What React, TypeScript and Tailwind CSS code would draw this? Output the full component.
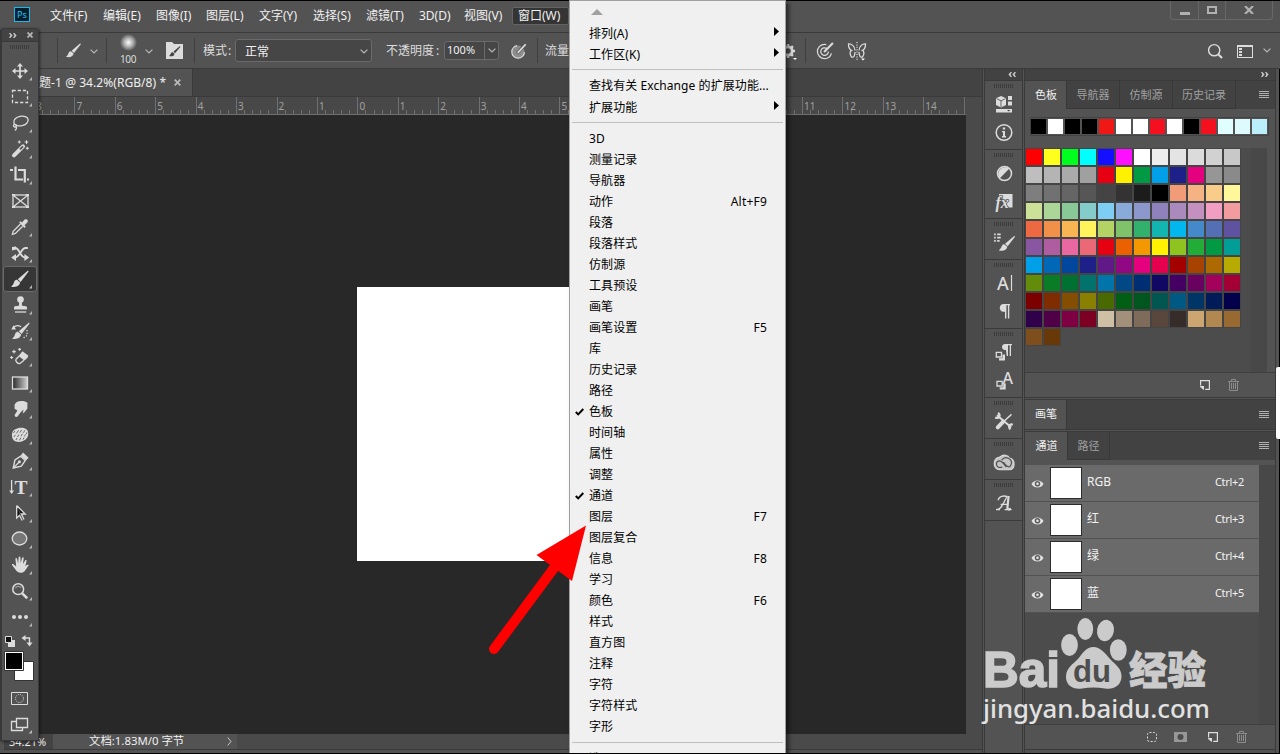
import type { ReactNode } from 'react';
import clsx from 'clsx';

const menus = [
	{ label: '文件(F)', width: 'w-[53px]' },
	{ label: '编辑(E)', width: 'w-[53px]' },
	{ label: '图像(I)', width: 'w-[50px]' },
	{ label: '图层(L)', width: 'w-[53px]' },
	{ label: '文字(Y)', width: 'w-[54px]' },
	{ label: '选择(S)', width: 'w-[53px]' },
	{ label: '滤镜(T)', width: 'w-[53px]' },
	{ label: '3D(D)', width: 'w-[45px]' },
	{ label: '视图(V)', width: 'w-[48px]' },
];

type MenuRow = { label: string; key?: string; checked?: boolean };

const windowItems: MenuRow[] = [
	{ label: '3D' },
	{ label: '测量记录' },
	{ label: '导航器' },
	{ label: '动作', key: 'Alt+F9' },
	{ label: '段落' },
	{ label: '段落样式' },
	{ label: '仿制源' },
	{ label: '工具预设' },
	{ label: '画笔' },
	{ label: '画笔设置', key: 'F5' },
	{ label: '库' },
	{ label: '历史记录' },
	{ label: '路径' },
	{ label: '色板', checked: true },
	{ label: '时间轴' },
	{ label: '属性' },
	{ label: '调整' },
	{ label: '通道', checked: true },
	{ label: '图层', key: 'F7' },
	{ label: '图层复合' },
	{ label: '信息', key: 'F8' },
	{ label: '学习' },
	{ label: '颜色', key: 'F6' },
	{ label: '样式' },
	{ label: '直方图' },
	{ label: '注释' },
	{ label: '字符' },
	{ label: '字符样式' },
	{ label: '字形' },
];

const recent =
	'000000 ffffff 000000 000000 f01814 ffffff ffffff f51020 ffffff 000000 f51020 e0fdff dffafd baeefa'.split(
		' '
	);

const swatches = [
	'ff0000 ffff1e 00ff1e 00ffff 1410ff ff0fff ffffff ededed e4e4e4 dbdbdb d1d1d1 c8c8c8',
	'bebebe b4b4b4 aaaaaa a0a0a0 e60012 fff100 009944 00a0e9 1d2088 e4007f 969696 8a8a8a',
	'7e7e7e 717171 656565 565656 444444 333333 1c1c1c 000000 f19b78 f5b282 f9cc8a fff799',
	'cce198 acd598 89c997 84ccc9 7ecef4 88abda 8c97cb 8f82bc aa89bd c490bf f19ec2 f29c9f',
	'ec6941 f19149 f8b551 fff45c b3d465 80c269 32b16c 13b5b1 00b7ee 448aca 556fb5 5f52a0',
	'8957a1 ae5da1 ea68a2 eb6877 e60012 eb6100 f39800 fff100 8fc31f 22ac38 009944 009e96',
	'00a0e9 0068b7 00479d 1d2088 601986 920783 e4007f e5004f a40000 a84200 ac6a00 b7aa00',
	'638c0b 097c25 007130 00736d 0075a9 004986 002e73 100964 440062 6a005f a4005b a40035',
	'7d0000 7f2d00 834e00 8a8000 486a00 005e15 00561f 005752 005982 003567 001c58 03004c',
	'31004a 500047 7e0043 7d0022 cfbfa5 a3907b 7e6b5a 59463d 362c2a cca571 b18850 986931',
	'7e4f1c 693808',
].map((r) => r.split(' '));

const channels = [
	{ name: 'RGB', key: 'Ctrl+2' },
	{ name: '红', key: 'Ctrl+3' },
	{ name: '绿', key: 'Ctrl+4' },
	{ name: '蓝', key: 'Ctrl+5' },
];

// 6-10 are covered by the open menu
const majors = [8, 7, 6, 5, 4, 3, 2, 1, 0, 1, 2, 3, 4, 5, '', '', '', '', '', 11, 12, 13, 14, ''];

function Icon({ size = 20, children, className }: { size?: number; children: ReactNode; className?: string }) {
	return (
		<svg
			width={size}
			height={size}
			viewBox="0 0 20 20"
			fill="none"
			stroke="#dcdcdc"
			strokeWidth="1.3"
			className={clsx('shrink-0 overflow-visible', className)}
		>
			{children}
		</svg>
	);
}

const F = { fill: '#dcdcdc', stroke: 'none' };

function BrushShape() {
	return (
		<>
			<path {...F} d="M18 1.6L7.8 10.2L10.6 13L18.6 2.6Z" />
			<path {...F} d="M7 10.8C4.4 10.9 4.4 12.8 3.6 14.4C3.1 15.6 2 16.8 1 17.4C4.8 18.8 9.8 17.4 10.1 13.6Z" />
		</>
	);
}

const tools: { id: string; art: ReactNode; plain?: boolean }[] = [
	{
		id: 'move',
		art: (
			<>
				<path d="M10 4V16M4 10H16" strokeWidth="1.7" />
				<path {...F} d="M10 2L13 5.5H7ZM10 18L7 14.5H13ZM2 10L5.5 7V13ZM18 10L14.5 13V7Z" />
			</>
		),
	},
	{ id: 'marquee', art: <rect x="2.5" y="3.5" width="15" height="12" strokeDasharray="3.2 2" /> },
	{
		id: 'lasso',
		art: (
			<>
				<ellipse cx="11" cy="8" rx="7.3" ry="4.8" transform="rotate(-12 11 8)" />
				<path d="M4 11.5C2.6 12.8 4 14.6 5.8 13.8C7.4 12.8 5.4 10.8 4 11.7M6 13.5C7.2 15 6 17 4.8 17.4" />
			</>
		),
	},
	{
		id: 'wand',
		art: (
			<>
				<path d="M4 16.4L13 7.4" strokeWidth="4" strokeLinecap="round" />
				<path d="M10 10.3L13 7.3" stroke="#535353" strokeWidth="1.8" />
				<path d="M9.3 1.5V4.5M7.8 3H10.8M16.5 1.2V5M14.6 3H18.4M17.3 7.7V10.7M15.8 9.2H18.8" strokeWidth="1.1" />
			</>
		),
	},
	{
		id: 'crop',
		art: (
			<>
				<path d="M5.5 1.5V14.5H13M8 5H14.8V17.5" strokeWidth="2.2" />
				<path {...F} d="M0 4H3V6H0ZM17 13.5H19V15.5H17Z" />
			</>
		),
	},
	{
		id: 'frame',
		plain: true,
		art: (
			<>
				<rect x="3" y="4" width="15" height="12" />
				<path d="M3 4L18 16M18 4L3 16" />
				<path {...F} d="M2 3h3v2H2zM16 3h3v2h-3zM2 15h3v2H2zM16 15h3v2h-3z" />
			</>
		),
	},
	{
		id: 'eyedropper',
		art: (
			<>
				<path d="M10.5 7L3.2 14.4L2.4 17.3L5.4 16.5L12.7 9.3" />
				<path {...F} d="M9.2 5.4L10.5 4.2L12 5.6L14.6 2.6C16.5 1.2 19 3.5 17.3 5.5L14.5 8.2L15.8 9.6L14.5 10.9Z" />
			</>
		),
	},
	{
		id: 'mixer',
		art: (
			<>
				<path d="M2.5 5H5C10 5 10 14.5 15 14.5M17.8 5H15.5C11 5.2 9.6 14.5 5 14.5" strokeWidth="1.8" />
				<path {...F} d="M1.2 14.5L6 11V18ZM19.2 14.5L14.4 11V18ZM2 4L6 3.6V6.6L2 7.4Z" />
			</>
		),
	},
	{ id: 'brush', art: <BrushShape /> },
	{
		id: 'stamp',
		art: (
			<>
				<circle {...F} cx="10.5" cy="4.6" r="3.3" />
				<path {...F} d="M9.1 6H11.9V10.5C14 11.4 17 10.8 17 12.4V14.4H4V12.4C4 10.8 7 11.4 9.1 10.5Z" />
				<path d="M5 17H16.2" />
			</>
		),
	},
	{
		id: 'history',
		art: (
			<>
				<g transform="translate(1 0)">
					<BrushShape />
				</g>
				<path d="M3.5 6.5C6 4 9 4.6 11 5.8" />
				<path {...F} d="M1.2 8.5L3.6 4.2L6 8.5Z" />
				<path d="M17 9V14.5L12.5 17.6" strokeDasharray="1.2 1.6" />
			</>
		),
	},
	{
		id: 'eraser',
		art: (
			<>
				<path {...F} d="M12.5 4.2L18.2 8.4C18.6 9.8 16 12.4 14.3 13.5L8.5 9Z" />
				<path d="M9 9.2L6 12.2C5 14 7.6 17 10 16.5L14 13.2" />
				<path d="M4 2.8V6.4M2.2 4.6H5.8M9.6 1V3.8M8.2 2.4H11M1.6 9V12M.1 10.5H3.1" strokeWidth="1.1" />
			</>
		),
	},
	{
		id: 'gradient',
		art: (
			<>
				<defs>
					<linearGradient id="gt">
						<stop offset="0" stopColor="#2a2a2a" />
						<stop offset="1" stopColor="#d0d0d0" />
					</linearGradient>
				</defs>
				<rect x="2.5" y="4" width="15" height="12" fill="url(#gt)" />
			</>
		),
	},
	{
		id: 'smudge',
		art: (
			<path
				{...F}
				d="M6.4 3.2C10 1.4 15 1.7 17.4 3.8V9.5L14.5 13.2L12.6 14.5L13.6 10.5L10.7 13.2L7.6 17.5C6.2 18.6 4 17.5 4.8 15.8L7.4 11.4L4.6 9.7V5.4Z"
			/>
		),
	},
	{
		id: 'sponge',
		art: (
			<>
				<path {...F} d="M5 4.6C8 2.6 13 2.2 16 4C19 6 18.6 10 17.3 12.4C15 16 10 17.6 6 16.6C2 15.2 1.6 11 2.2 8C2.7 6 3.6 5.4 5 4.6Z" />
				<path
					d="M3.4 8L5 6M6.4 8.4L8.6 5.4M10 7.6L11.6 4.8M13.4 7.8L14.8 5.4M16.4 9L17 7.4M3.8 12L5.4 9.8M7.4 12L9 9.6M11 11.2L12.4 8.8M14.4 11.4L15.6 9.4M6 15L7 13M9.4 15.4L10.8 12.8M13 14.6L14 12.6"
					stroke="#6a6a6a"
					strokeWidth="1"
				/>
			</>
		),
	},
	{
		id: 'pen',
		art: (
			<>
				<path d="M3.3 17L4.9 9L10.8 5.2L15.2 9.6L11.3 15.2Z" strokeWidth="1.4" />
				<path d="M3.6 16.6L9 11.2" />
				<circle {...F} cx="9.4" cy="10.8" r="1.5" />
				<path {...F} d="M13 1.6L18.6 6.8L16 9.6L10.8 4.6Z" />
			</>
		),
	},
	{
		id: 'type',
		art: (
			<>
				<path d="M1.6 3V15.5" />
				<path {...F} d="M-.8 13.6H4L1.6 17Z" />
				<text x="4.6" y="16.7" fontSize="19.5" fontWeight="bold" fontFamily="Liberation Serif, serif" {...F}>
					T
				</text>
			</>
		),
	},
	{ id: 'select', art: <path d="M6.7 2.5V15L9.6 12.3L12.2 17.5M6.7 2.5L15.2 11H11.4L14 16.6" fill="#101010" /> },
	{ id: 'ellipse', art: <ellipse cx="9.5" cy="9.5" rx="7.3" ry="6.5" fill="#777" /> },
	{
		id: 'hand',
		art: (
			<path
				{...F}
				d="M6 9.2L5.4 4C5.4 2.8 6.9 2.8 7.1 4L8.1 8.5L8.6 2.4C8.7 1.2 10.3 1.2 10.4 2.4L10.7 8.3L12 2.9C12.3 1.8 13.8 2 13.7 3.2L13 9L15.1 5.4C15.7 4.5 16.9 5.1 16.5 6.3L15.4 11C17 10 18.6 9.4 18.8 10.3L15.4 15C14 18.4 8.6 18.9 6.2 15.6L2 9.9C1.6 8.8 3 8.6 3.9 9.4L6.2 11.6Z"
			/>
		),
	},
	{
		id: 'zoom',
		art: (
			<>
				<circle cx="8.2" cy="8.2" r="5.4" strokeWidth="1.5" />
				<path d="M5.4 7.2C6 5.2 9.5 4.4 11 6.8" stroke="#999" />
				<path d="M12.2 12.4L17.2 17.2" strokeWidth="2.6" />
			</>
		),
	},
	{
		id: 'more',
		art: (
			<>
				<circle {...F} cx="4" cy="10" r="2" />
				<circle {...F} cx="10" cy="10" r="2" />
				<circle {...F} cx="16" cy="10" r="2" />
			</>
		),
	},
];

function Grip({ className }: { className?: string }) {
	return (
		<svg width="20" height="4" className={clsx('shrink-0', className)}>
			{Array.from({ length: 10 }, (_, i) => (
				<rect key={i} x={i * 2} width="1" height="4" fill="#3c3c3c" />
			))}
		</svg>
	);
}

function Chevron() {
	return (
		<svg width="8" height="5" viewBox="0 0 8 5" fill="none" stroke="#b8b8b8" strokeWidth="1.2" className="shrink-0">
			<path d="M.6 .6L4 4L7.4 .6" />
		</svg>
	);
}

function DoubleArrow({ left }: { left?: boolean }) {
	return (
		<svg width="8" height="5" viewBox="0 0 8 5" fill="#c8c8c8" className={clsx(left && 'rotate-180')}>
			<path d="M0 0H1.4L3.6 2.5L1.4 5H0L1.4 2.5ZM4 0H5.4L7.6 2.5L5.4 5H4L5.4 2.5Z" />
		</svg>
	);
}

function PanelMenu() {
	return (
		<div className="mr-[6px] mb-px ml-auto flex flex-col gap-px">
			<i className="h-px w-[10px] bg-[#b0b0b0]" />
			<i className="h-px w-[10px] bg-[#b0b0b0]" />
			<i className="h-px w-[10px] bg-[#b0b0b0]" />
			<i className="h-px w-[10px] bg-[#b0b0b0]" />
		</div>
	);
}

function NewIcon() {
	return (
		<svg width="10" height="10" viewBox="0 0 10 10" fill="none" stroke="#dcdcdc" strokeWidth="1.2" className="shrink-0">
			<path d="M.6 5.5V.6H9.4V9.4H5.2" />
			<path d="M0 6H4V10L2.4 8.9L0 6.8Z" fill="#dcdcdc" stroke="none" />
		</svg>
	);
}

function Trash() {
	return (
		<svg width="11" height="12" viewBox="0 0 11 12" fill="none" stroke="#8c8c8c" className="shrink-0">
			<path d="M0 2.5H11M3.5 2V.5H7.5V2M1.5 3V11.5H9.5V3M3.5 4V10M5.5 4V10M7.5 4V10" />
		</svg>
	);
}

function TitleBar() {
	return (
		<div className="flex h-[33px] shrink-0 border-t border-b border-t-black border-b-[#3a3a3a] text-[12px] text-[#f0f0f0]">
			<div className="mt-[6px] ml-[14px] flex h-[15px] w-4 items-center justify-center border border-[#14b9ee] bg-[#051e2c] text-[9px] leading-none text-[#1ec3f5]">
				Ps
			</div>
			<div className="ml-5 flex h-[30px] items-center">
				{menus.map((m) => (
					<span key={m.label} className={clsx('whitespace-nowrap', m.width)}>
						{m.label}
					</span>
				))}
				<span className="flex h-[18px] w-[57px] items-center rounded-[2px] border border-[#636363] bg-[#353535] pl-[5px] whitespace-nowrap">
					窗口(W)
				</span>
			</div>
			<div className="mr-[7px] ml-auto flex h-[19px] w-[103px] rounded-b-[3px] border border-t-0 border-[#686868]">
				<div className="flex w-[28px] items-end justify-center border-r border-[#686868] pb-[4px]">
					<i className="h-[3px] w-[10px] bg-[#b0b0b0]" />
				</div>
				<div className="flex w-[27px] items-center justify-center border-r border-[#686868]">
					<i className="h-[8px] w-[10px] border-2 border-[#b0b0b0]" />
				</div>
				<div className="flex flex-1 items-center justify-center">
					<svg width="10" height="8" viewBox="0 0 10 8" stroke="#b0b0b0" strokeWidth="2.2">
						<path d="M1 0L9 8M9 0L1 8" />
					</svg>
				</div>
			</div>
		</div>
	);
}

function Divider({ className }: { className?: string }) {
	return <i className={clsx('h-[25px] w-px shrink-0 bg-[#3f3f3f]', className)} />;
}

function OptionsBar() {
	return (
		<div className="flex h-9 shrink-0 items-center border-b border-[#3a3a3a] text-[12px] whitespace-nowrap text-[#dcdcdc]">
			<Divider className="ml-[57px]" />
			<Icon size={17} className="mb-px ml-[7px]">
				<BrushShape />
			</Icon>
			<div className="mt-px ml-[8px]">
				<Chevron />
			</div>
			<Divider className="ml-[8px]" />
			<div className="ml-[12px] flex w-[18px] flex-col items-center">
				<i className="size-[17px] shrink-0 rounded-full bg-[radial-gradient(circle,#f2f2f2_5%,#b4b4b4_35%,#535353_72%)]" />
				<span className="mt-px text-[10px] leading-[15px] tracking-[-0.4px]">100</span>
			</div>
			<div className="mt-px ml-[8px]">
				<Chevron />
			</div>
			<svg width="17" height="17" viewBox="0 0 17 17" className="ml-[13px]">
				<path fill="#dcdcdc" d="M0 0H6L8 2H17V17H0Z" />
				<path fill="#444" d="M14 4L7.5 9.5L9 11.2L14.3 5ZM6.8 10.2C4.6 10 5 12.6 3 14C5 14.8 8.4 14.4 8.5 11.8Z" />
			</svg>
			<Divider className="ml-[11px]" />
			<span className="ml-[8px]">模式</span>
			<span className="w-[8px] pl-[1px]">:</span>
			<div className="flex h-[23px] w-[137px] items-center justify-between rounded-[3px] border border-[#6a6a6a] bg-[#464646] pt-[2px] pr-[3px] pl-[9px] text-[#f0f0f0]">
				正常
				<Chevron />
			</div>
			<span className="ml-[14px]">不透明度</span>
			<span className="w-[10px] pl-[2px]">:</span>
			<div className="flex h-[19px] w-[55px] items-center rounded-[3px] border border-[#6a6a6a] bg-[#464646] pl-[2px] text-[11px] text-[#f0f0f0]">
				<span className="w-[37px]">100%</span>
				<span className="flex h-full w-[14px] items-center justify-center border-l border-[#6a6a6a]">
					<Chevron />
				</span>
			</div>
			<Icon size={18} className="ml-[11px]">
				<circle cx="9" cy="11" r="7" fill="#8c8c8c" strokeDasharray="31 13" />
				<path d="M8 12.5L16.5 3" strokeWidth="3.4" stroke="#535353" />
				<path d="M8.5 12L17.5 2.5" strokeWidth="2" />
			</Icon>
			<Divider className="ml-[9px]" />
			<span className="w-[243px] pl-[7px]">流量</span>
			<Icon size={14}>
				<circle cx="10" cy="10" r="6" strokeWidth="4" />
				<path d="M10 0V4M10 16V20M0 10H4M16 10H20M3 3L6 6M14 14L17 17M3 17L6 14M14 6L17 3" strokeWidth="3.4" />
			</Icon>
			<svg width="4" height="2" className="mt-[17px] ml-[-2px]" fill="#fff">
				<path d="M0 0H4L2 2Z" />
			</svg>
			<Divider className="ml-[8px]" />
			<Icon size={19} className="mb-px ml-[10px]">
				<circle cx="9" cy="11" r="7.5" strokeDasharray="35 12" strokeDashoffset="-2" />
				<path d="M11.5 8A4 4 0 1 0 13 11" />
				<path d="M8.5 11.5L17.8 2" strokeWidth="2.2" />
			</Icon>
			<Icon size={20} className="ml-[12px]">
				<path d="M10 1V19" strokeDasharray="1 1.4" />
				<path d="M8 9.5C8 5 4 2.5 1.5 3C1.5 6 2.5 8.5 4.5 9.3C2.5 10.3 2.8 14 4.5 16C7 17 8 14 8 11M12 9.5C12 5 16 2.5 18.5 3C18.5 6 17.5 8.5 15.5 9.3C17.5 10.3 17.2 14 15.5 16C13 17 12 14 12 11" />
				<path d="M14 17.5H18L16 19.5Z" fill="#fff" stroke="none" />
			</Icon>
			<Icon size={16} className="ml-auto">
				<circle cx="9" cy="9" r="7" strokeWidth="1.8" />
				<path d="M14 14L18.8 18.8" strokeWidth="2.6" />
			</Icon>
			<div className="mt-px ml-[14px] flex h-[13px] w-4 items-center border border-t-2 border-[#dcdcdc] pl-px">
				<svg width="3" height="8" fill="#dcdcdc">
					<path d="M0 0H3V2H0ZM0 3H3V5H0ZM0 6H3V8H0Z" />
				</svg>
			</div>
			<div className="mr-[9px] ml-[10px]">
				<Chevron />
			</div>
		</div>
	);
}

function Ruler() {
	return (
		<div className="flex h-[18px] overflow-hidden border-b border-[#6e6e6e] bg-[#484848] pl-[34px] text-[10px] text-[#a0a0a0]">
			{majors.map((n, i) => (
				<div key={i} className="flex w-[40.43px] shrink-0 items-end">
					<div className="flex h-full w-[8.09px] items-center border-l border-[#707070] pl-px leading-none">
						{n}
					</div>
					<i className="h-[4px] w-[8.09px] border-l border-[#707070]" />
					<i className="h-[4px] w-[8.09px] border-l border-[#707070]" />
					<i className="h-[4px] w-[8.09px] border-l border-[#707070]" />
					<i className="h-[4px] w-[8.09px] border-l border-[#707070]" />
				</div>
			))}
		</div>
	);
}

function DocumentArea() {
	return (
		<div className="flex w-[983px] shrink-0 flex-col border-r border-[#3a3a3a]">
			<div className="flex h-[28px] border-b border-[#3a3a3a] bg-[#434343]">
				<div className="flex w-[193px] items-center border-r border-[#3a3a3a] bg-[#535353] text-[12px] whitespace-nowrap text-[#f0f0f0]">
					<span className="ml-[27px] w-[147px] pt-px tracking-[0.06px]">标题-1 @ 34.2%(RGB/8) *</span>
					<svg width="7" height="7" viewBox="0 0 7 7" stroke="#b8b8b8" strokeWidth="1.8">
						<path d="M.7 .7L6.3 6.3M6.3 .7L.7 6.3" />
					</svg>
				</div>
			</div>
			<div className="flex min-h-0 flex-1">
				<div className="flex w-[966px] flex-col">
					<Ruler />
					<div className="flex-1 bg-[#282828] pt-[172px] pl-[357px]">
						<div className="h-[274px] w-[406px] bg-white" />
					</div>
				</div>
				<div className="flex-1 bg-[#4a4a4a]" />
			</div>
			<div className="ml-1 flex h-4 items-center border-b border-[#3a3a3a] bg-[#4a4a4a] text-[11px] whitespace-nowrap text-[#f0f0f0]">
				<span className="w-[49px] bg-[#434343] pl-[5px] leading-[15px]">34.21%</span>
				<div className="flex h-full w-[184px] items-center bg-[#535353] pl-[36px] leading-none">
					<span className="w-[138px] pb-px text-[11.4px]">文档:1.83M/0 字节</span>
					<svg width="5" height="9" viewBox="0 0 5 9" fill="none" stroke="#c8c8c8">
						<path d="M.7 .5L4 4.5L.7 8.5" />
					</svg>
				</div>
			</div>
			<div className="h-[3px]" />
		</div>
	);
}

function DockGroup({ children, tall }: { children: ReactNode; tall?: boolean }) {
	return (
		<div
			className={clsx(
				'flex shrink-0 flex-col items-center border-b border-[#3a3a3a] pt-[3px]',
				tall ? 'h-[69px]' : 'h-[41px]'
			)}
		>
			<Grip />
			<div className={clsx('flex flex-col items-center pl-px', tall ? 'mt-[6px] gap-[9px]' : 'mt-[5px]')}>
				{children}
			</div>
		</div>
	);
}

function Dock() {
	return (
		<div className="ml-px flex w-[39px] shrink-0 flex-col border-r border-l border-[#3a3a3a]">
			<div className="flex h-[12px] shrink-0 items-center justify-end border-b border-[#3a3a3a] bg-[#424242] pr-[6px]">
				<DoubleArrow left />
			</div>
			<DockGroup tall>
				<Icon>
					<path {...F} d="M7 2L12 4.3V11L7 13.5L2 11V4.3Z" />
					<path d="M2.5 4.6L7 6.8L11.5 4.6M7 6.8V13" stroke="#666" strokeWidth="1" />
					<path {...F} d="M14 2H18V6H14ZM14 7.5H18V11.5H14ZM2 15H18V18.5H2Z" />
					<path fill="#444" stroke="none" d="M13 16H16.4L14.7 17.6Z" />
				</Icon>
				<Icon>
					<circle cx="10" cy="9.5" r="7.8" strokeWidth="1.5" />
					<path {...F} d="M8.8 4.5H11.2V6.5H8.8ZM8 7.9H11V13.1H12V14.5H8V13.1H9V9.3H8Z" />
				</Icon>
			</DockGroup>
			<DockGroup tall>
				<Icon>
					<circle cx="10.5" cy="10.5" r="7" strokeWidth="1.5" />
					<path {...F} d="M5.6 15.4L15.4 5.6A7 7 0 0 0 5.6 15.4Z" />
				</Icon>
				<Icon>
					<path {...F} d="M5 2H18.5V15.5H11V9H5Z" />
					<text x="1.5" y="16" fontSize="16" fontStyle="italic" fontWeight="bold" fontFamily="Liberation Serif, serif" fill="#dcdcdc" stroke="#535353" strokeWidth="1.6" paintOrder="stroke">
						fx
					</text>
				</Icon>
			</DockGroup>
			<DockGroup>
				<Icon size={22}>
					<g transform="translate(4.4 3) scale(.84)">
						<BrushShape />
					</g>
					<path d="M1 3H2.5M3.8 3H7M1 6H2.5M3.8 6H7M1 9H2.5M3.8 9H6" strokeWidth="1.6" />
				</Icon>
			</DockGroup>
			<DockGroup tall>
				<Icon>
					<text x="3" y="16.5" fontSize="18" fontFamily="Noto Sans, sans-serif" {...F} fontWeight="500">
						A
					</text>
					<path d="M17.5 2V18" strokeWidth="1.2" />
				</Icon>
				<Icon>
					<path {...F} d="M11 9.8H9.5C4.5 9.8 4.5 2 9.5 2H16V3.2H15.3V16.5H13.9V3.2H12.4V16.5H11Z" />
				</Icon>
			</DockGroup>
			<DockGroup tall>
				<Icon>
					<path {...F} d="M12 8H11C7 8 7 2 11 2H18V3.2H17V14H15.7V3.2H14V14H12.7Z" />
					<path d="M2.3 10.3H7.5V15H2.3Z" />
					<path {...F} d="M8.5 12.5H11V18.5H5V16.2H8.5Z" />
				</Icon>
				<Icon>
					<text x="8.6" y="13.3" fontSize="16" fontFamily="Noto Sans, sans-serif" {...F} fontWeight="500">
						A
					</text>
					<path d="M3 10.3H8.2V15H3Z" />
					<path {...F} d="M9.2 12.5H11.7V18.5H5.7V16.2H9.2Z" />
				</Icon>
			</DockGroup>
			<DockGroup>
				<Icon size={22}>
					<path d="M3.6 4.8L16.5 15.6" strokeWidth="1.8" />
					<path d="M16.8 4L9.5 10.6" strokeWidth="1.3" />
					<path d="M9.3 10.6L4.3 15.8" strokeWidth="3.6" strokeLinecap="round" />
					<path d="M2 6.8C5.6 8.4 7.2 4.6 4.6 2.6M18 13.4C15 12 13.6 15.4 15.8 17.6" strokeWidth="2" />
				</Icon>
			</DockGroup>
			<DockGroup>
				<Icon size={22} className="mt-px">
					<path fill="#c4c4c4" stroke="#dcdcdc" strokeWidth="1" d="M6.2 4.6C9.6 1.6 14 3 14.8 5.4C20.8 6.6 20.6 15.8 14.6 16.2H6.2C-.6 15.8 -.6 5.8 6.2 4.6Z" />
					<path
						d="M8.4 13.6C3 16 1 8.6 5.8 8C8 7.8 9 9.8 12 13.4M7.8 7.4C11.4 2.6 18 6.6 16.6 11C15.4 14.6 12.8 13.8 11 11.2L9.4 9.2"
						stroke="#505050"
						strokeWidth="1.1"
					/>
				</Icon>
			</DockGroup>
			<DockGroup>
				<Icon size={20} className="mt-px">
					<path d="M2.6 16.2C7 18 10.4 8 13 3.5C10 2.4 4.6 3 4.2 7.2" strokeWidth="1.4" />
					<path d="M14.6 3L13.4 14.6C13.4 16.8 15.4 16.8 17 15.8" strokeWidth="2.2" />
					<path d="M6.6 11.4H14M2 16.6H6M10.6 16.6H17.4" strokeWidth="1.1" />
				</Icon>
			</DockGroup>
		</div>
	);
}

function Tab({ label, active, width }: { label: string; active?: boolean; width: string }) {
	return (
		<div
			className={clsx(
				'flex shrink-0 items-center justify-center border-r border-[#383838] text-[11px] whitespace-nowrap',
				active ? 'bg-[#535353] pl-px text-[#f0f0f0]' : 'border-b pt-px text-[#a0a0a0]',
				width
			)}
		>
			{label}
		</div>
	);
}

function SwatchPanel() {
	return (
		<div className="flex h-[317px] shrink-0 flex-col border-b border-[#3a3a3a]">
			<div className="flex h-[28px] shrink-0 items-center bg-[#424242]">
				<div className="flex h-full">
					<Tab label="色板" active width="w-[42px]" />
					<Tab label="导航器" width="w-[53px]" />
					<Tab label="仿制源" width="w-[53px]" />
					<Tab label="历史记录" width="w-[63px]" />
				</div>
				<PanelMenu />
			</div>
			<div className="mt-[8px] ml-[5px] flex h-[19px] w-[239px] gap-[2px] border border-[#434343] pt-px">
				{recent.map((c, i) => (
					<i key={i} className="h-[15px] w-[15px] shrink-0" style={{ background: '#' + c }} />
				))}
			</div>
			<div className="mt-[12px] flex h-[224px] shrink-0 bg-[#4c4c4c]">
				<div className="w-[226px] shrink-0">
					{swatches.map((row, i) => (
						<div key={i} className="flex">
							{row.map((c, j) => (
								<i key={j} className="size-[18px] border border-[#454545]" style={{ background: '#' + c }} />
							))}
						</div>
					))}
				</div>
				<div className="w-[16px] bg-[#484848]" />
				<div className="flex-1 bg-[#535353]" />
			</div>
			<div className="flex flex-1 items-center gap-[18px] border-t border-[#3f3f3f] pl-[175px]">
				<NewIcon />
				<Trash />
			</div>
		</div>
	);
}

function ChannelPanel() {
	return (
		<div className="mt-px flex min-h-0 flex-1 flex-col border-t border-b border-[#3a3a3a]">
			<div className="flex h-[28px] shrink-0 items-center bg-[#424242]">
				<div className="flex h-full">
					<Tab label="通道" active width="w-[43px]" />
					<Tab label="路径" width="w-[42px]" />
				</div>
				<PanelMenu />
			</div>
			<div className="mt-[5px] flex min-h-0 flex-1 bg-[#4c4c4c]">
				<div className="w-[234px]">
					{channels.map((c) => (
						<div key={c.name} className="flex h-[37px] items-center border-b border-[#525252] bg-[#6a6a6a]">
							<svg width="13" height="10" viewBox="0 0 13 10" fill="none" className="mt-px ml-[6px]">
								<path d="M.5 5C3 .2 10 .2 12.5 5C10 9.8 3 9.8 .5 5Z" fill="#e4e4e4" />
								<circle cx="6.5" cy="4.8" r="2.8" fill="#5e5e5e" />
								<circle cx="6.5" cy="4.8" r="1.3" fill="#e4e4e4" />
							</svg>
							<div className="ml-[6px] size-[32px] border border-[#2c2c2c] bg-white" />
							<span className="mb-[2px] ml-[5px] text-[12px] leading-none text-[#f2f2f2]">{c.name}</span>
							<span className="mr-[15px] mb-[4px] ml-auto text-[11px] leading-none tracking-[-0.3px] text-[#f2f2f2]">
								{c.key}
							</span>
						</div>
					))}
				</div>
				<div className="flex-1 bg-[#484848]" />
			</div>
			<div className="flex h-[25px] shrink-0 items-center border-t border-[#3f3f3f] pb-px pl-[121px]">
				<svg width="12" height="12" fill="none" stroke="#dcdcdc">
					<rect x="1.5" y="1.5" width="9" height="9" rx="2" strokeDasharray="2 1.5" />
				</svg>
				<svg width="13" height="10" className="ml-[16px]">
					<path d="M0 0H13V10H0Z" fill="#979797" />
					<circle cx="6.5" cy="5" r="3" fill="#4d4d4d" />
				</svg>
				<div className="ml-[21px]">
					<NewIcon />
				</div>
				<div className="ml-[18px]">
					<Trash />
				</div>
			</div>
		</div>
	);
}

function Panels() {
	return (
		<div className="ml-px flex w-[252px] shrink-0 flex-col border-r border-l border-[#3a3a3a]">
			<div className="flex h-[12px] shrink-0 items-center justify-end border-b border-[#3a3a3a] bg-[#424242] pr-[6px]">
				<DoubleArrow />
			</div>
			<SwatchPanel />
			<div className="mt-px flex h-[31px] shrink-0 items-center border-t border-b border-[#3a3a3a] bg-[#424242]">
				<div className="flex h-full">
					<Tab label="画笔" active width="w-[42px]" />
				</div>
				<PanelMenu />
			</div>
			<ChannelPanel />
			<div className="h-[3px] shrink-0" />
		</div>
	);
}

function Toolbox() {
	return (
		<div className="absolute top-[28px] left-0 flex h-[713px] w-[39px] flex-col rounded-t-[4px] border border-l-2 border-[#383838] bg-[#535353] shadow-[1px_1px_3px_rgba(0,0,0,.5)]">
			<div className="flex h-[13px] shrink-0 items-center border-b border-[#383838] bg-[#434343] pl-[7px]">
				<DoubleArrow />
				<svg width="6" height="6" viewBox="0 0 6 6" stroke="#b8b8b8" strokeWidth="1.7" className="ml-[10px]">
					<path d="M.5 .5L5.5 5.5M5.5 .5L.5 5.5" />
				</svg>
			</div>
			<Grip className="mt-[3px] ml-[8px]" />
			<div className="mt-[9px] flex flex-col">
				{tools.map((t) => (
					<div
						key={t.id}
						className={clsx(
							'flex h-[26px] items-center',
							t.id === 'brush'
								? 'mr-[1px] ml-[1px] rounded-[3px] border border-[#6a6a6a] bg-[#363636] pl-[5.5px]'
								: 'pl-[7.5px]'
						)}
					>
						<Icon>{t.art}</Icon>
						{!t.plain && (
							<svg width="4" height="4" className="mt-[16px] ml-[-0.5px]" fill="#b8b8b8">
								<path d="M3 0V3.5H0Z" />
							</svg>
						)}
					</div>
				))}
			</div>
			<svg width="36" height="106" viewBox="2 630 36 106" fill="none" className="shrink-0">
				<path d="M8 640H15V647H8Z" fill="#dcdcdc" />
				<path d="M5.5 636.5H11.5V642.5H5.5Z" fill="#111" stroke="#dcdcdc" />
				<path d="M24 638H29.5V643" stroke="#dcdcdc" strokeWidth="1.4" />
				<path d="M21.5 638L25.5 635V641ZM29.5 646.5L26.5 642.5H32.5Z" fill="#dcdcdc" />
				<path d="M14.5 661.5H33.5V680.5H14.5Z" fill="#fff" stroke="#333" />
				<path d="M4.5 651.5H23.5V670.5H4.5Z" fill="#fff" stroke="#333" />
				<path d="M6 653H22V669H6Z" fill="#000" />
				<path d="M11.5 692.5H27.5V704.5H11.5Z" stroke="#dcdcdc" />
				<circle cx="19.5" cy="698.5" r="4" stroke="#dcdcdc" strokeDasharray="1 1.1" />
				<path d="M11.5 721.5H22.5V730.5H11.5Z" stroke="#dcdcdc" strokeWidth="1.3" />
				<path d="M16.5 718.5H27.5V727.5H16.5Z" fill="#535353" stroke="#dcdcdc" strokeWidth="1.3" />
				<path d="M32 730V733.5H28.5Z" fill="#b8b8b8" />
			</svg>
		</div>
	);
}

function MenuItem({ label, mark, checked, sub }: { label: string; mark?: string; checked?: boolean; sub?: boolean }) {
	return (
		<div className="flex h-[21px] shrink-0 items-center pr-[18px] leading-none whitespace-nowrap">
			<span className="w-[19px] shrink-0 pl-[5px]">
				{checked && (
					<svg width="9" height="8" viewBox="0 0 9 8" fill="none" stroke="#000" strokeWidth="2">
						<path d="M.8 4L3.2 6.4L8.3 1" />
					</svg>
				)}
			</span>
			<span className="tracking-[0.08px]">{label}</span>
			{mark && <span className="ml-auto tracking-[0.2px]">{mark}</span>}
			{sub && (
				<svg width="5" height="9" className="mr-[-12px] mb-[4px] ml-auto shrink-0">
					<path d="M0 0L5 4.5L0 9Z" />
				</svg>
			)}
		</div>
	);
}

function Separator() {
	return <i className="mx-[2px] h-px shrink-0 bg-[#bfbfbf]" />;
}

function WindowMenu() {
	return (
		<div className="absolute top-0 left-[569px] flex h-[754px] w-[217px] flex-col overflow-hidden border border-b-0 border-[#a0a0a0] bg-[#f0f0f0] text-[12px] text-black shadow-[3px_3px_4px_rgba(0,0,0,.5)]">
			<svg width="12" height="6" className="mt-[8px] mb-[8px] ml-[21px] shrink-0">
				<path d="M6 0L12 6H0Z" fill="#a0a0a0" />
			</svg>
			<MenuItem label="排列(A)" sub />
			<MenuItem label="工作区(K)" sub />
			<div className="h-[4px] shrink-0" />
			<Separator />
			<div className="h-[5px] shrink-0" />
			<MenuItem label="查找有关 Exchange 的扩展功能..." />
			<div className="h-px shrink-0" />
			<MenuItem label="扩展功能" sub />
			<div className="h-[4px] shrink-0" />
			<Separator />
			<div className="h-[5px] shrink-0" />
			{windowItems.map((w) => (
				<MenuItem key={w.label} label={w.label} mark={w.key} checked={w.checked} />
			))}
			<div className="h-[5px] shrink-0" />
			<Separator />
			<div className="h-[5px] shrink-0" />
			<MenuItem label="选项" />
		</div>
	);
}

function Watermark() {
	return (
		<svg width="240" height="120" viewBox="975 612 240 120" className="absolute top-[612px] left-[975px]" fill="#cbcbcb">
			<text x="983" y="687" fontSize="50" fontWeight="bold" fontFamily="Liberation Sans, sans-serif" textLength="77" lengthAdjust="spacingAndGlyphs" stroke="#cbcbcb" strokeWidth="1.6">
				Bai
			</text>
			<ellipse cx="1069.5" cy="645" rx="8.4" ry="11" />
			<ellipse cx="1085.3" cy="629" rx="7.9" ry="11" />
			<ellipse cx="1105.5" cy="630.5" rx="8.4" ry="10.8" transform="rotate(12 1105.5 630.5)" />
			<ellipse cx="1118.3" cy="650" rx="8.4" ry="10.8" />
			<path d="M1093.5 647C1100 647 1105 653 1110 659C1116 665 1122 669 1121.5 677C1121 686 1113 690 1105 688.5C1097 687 1090 687 1082 688.5C1074 690 1066 686 1066 677C1066 668 1073 664 1078 659C1083 653 1086 647 1093.5 647Z" />
			<text x="1073" y="682" fontSize="32" fontWeight="bold" fontFamily="Liberation Sans, sans-serif" fill="#4e4e4e" textLength="38" lengthAdjust="spacingAndGlyphs">
				du
			</text>
			<text x="1129" y="684" fontSize="38.5" fontWeight="900" fontFamily="Noto Sans CJK SC, sans-serif" stroke="#cbcbcb" strokeWidth=".8">
				经验
			</text>
			<text x="983" y="718" fontSize="25" fontWeight="500" fontFamily="Noto Sans, sans-serif" fill="#e2e2e2" textLength="227" lengthAdjust="spacingAndGlyphs">
				jingyan.baidu.com
			</text>
		</svg>
	);
}

export default function App() {
	return (
		<div className="relative flex h-[754px] w-[1280px] flex-col overflow-hidden border-b border-black bg-[#535353] font-['Noto_Sans','Noto_Sans_CJK_SC',sans-serif]">
			<TitleBar />
			<OptionsBar />
			<div className="flex min-h-0 flex-1 border-r border-black">
				<DocumentArea />
				<Dock />
				<Panels />
			</div>
			<Toolbox />
			<div className="absolute top-[367px] left-[1276px] h-[72px] w-[4px] rounded-l-[2px] bg-white" />
			<WindowMenu />
			<Watermark />
			<svg width="110" height="140" viewBox="483 520 110 140" className="absolute top-[520px] left-[483px]">
				<path d="M494 649L557 564" stroke="#ff0000" strokeWidth="10" strokeLinecap="round" />
				<path d="M586 525.5L536.5 555L572 581Z" fill="#ff0000" />
			</svg>
		</div>
	);
}
